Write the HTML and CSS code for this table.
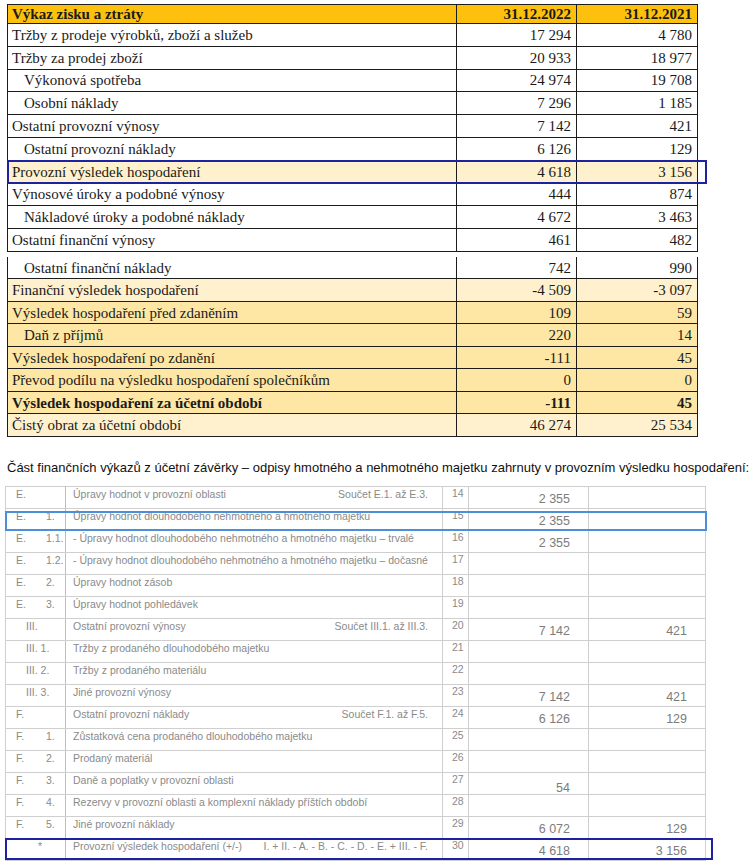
FILE: index.html
```html
<!DOCTYPE html>
<html lang="cs">
<head>
<meta charset="utf-8">
<title>Výkaz zisku a ztráty</title>
<link rel="stylesheet" href="styles.css">
</head>
<body>
<div class="top-block">
  <table class="pl pl-a">
    <colgroup><col class="c-label"><col class="c-val"><col class="c-val2"></colgroup>
    <tr class="head"><th class="lbl">Výkaz zisku a ztráty</th><th>31.12.2022</th><th>31.12.2021</th></tr>
    <tr><td class="lbl">Tržby z prodeje výrobků, zboží a služeb</td><td>17 294</td><td>4 780</td></tr>
    <tr><td class="lbl">Tržby za prodej zboží</td><td>20 933</td><td>18 977</td></tr>
    <tr><td class="lbl ind">Výkonová spotřeba</td><td>24 974</td><td>19 708</td></tr>
    <tr><td class="lbl ind">Osobní náklady</td><td>7 296</td><td>1 185</td></tr>
    <tr><td class="lbl">Ostatní provozní výnosy</td><td>7 142</td><td>421</td></tr>
    <tr><td class="lbl ind">Ostatní provozní náklady</td><td>6 126</td><td>129</td></tr>
    <tr class="light"><td class="lbl">Provozní výsledek hospodaření</td><td>4 618</td><td>3 156</td></tr>
    <tr><td class="lbl">Výnosové úroky a podobné výnosy</td><td>444</td><td>874</td></tr>
    <tr><td class="lbl ind">Nákladové úroky a podobné náklady</td><td>4 672</td><td>3 463</td></tr>
    <tr><td class="lbl">Ostatní finanční výnosy</td><td>461</td><td>482</td></tr>
  </table>
  <table class="pl pl-b">
    <colgroup><col class="c-label"><col class="c-val"><col class="c-val2"></colgroup>
    <tr class="notop"><td class="lbl ind">Ostatní finanční náklady</td><td>742</td><td>990</td></tr>
    <tr class="light"><td class="lbl">Finanční výsledek hospodaření</td><td>-4 509</td><td>-3 097</td></tr>
    <tr class="mid"><td class="lbl">Výsledek hospodaření před zdaněním</td><td>109</td><td>59</td></tr>
    <tr class="mid"><td class="lbl ind">Daň z příjmů</td><td>220</td><td>14</td></tr>
    <tr class="mid"><td class="lbl">Výsledek hospodaření po zdanění</td><td>-111</td><td>45</td></tr>
    <tr class="mid"><td class="lbl">Převod podílu na výsledku hospodaření společníkům</td><td>0</td><td>0</td></tr>
    <tr class="mid bold"><td class="lbl">Výsledek hospodaření za účetní období</td><td>-111</td><td>45</td></tr>
    <tr class="light"><td class="lbl">Čistý obrat za účetní období</td><td>46 274</td><td>25 534</td></tr>
  </table>
  <div class="mark mark-navy mark-top"></div>
</div>

<p class="caption">Část finančních výkazů z účetní závěrky – odpisy hmotného a nehmotného majetku zahrnuty v provozním výsledku hospodaření:</p>

<div class="scan-block">
  <table class="scan">
    <colgroup><col class="s-code"><col class="s-text"><col class="s-num"><col class="s-v1"><col class="s-v2"></colgroup>
    <tr><td class="code"><span class="k1">E.</span></td><td class="txt"><span>Úpravy hodnot v provozní oblasti</span><span class="sum">Součet E.1. až E.3.</span></td><td class="no">14</td><td class="v">2 355</td><td class="v"></td></tr>
    <tr><td class="code"><span class="k1">E.</span><span class="k2">1.</span></td><td class="txt"><span>Úpravy hodnot dlouhodobého nehmotného a hmotného majetku</span></td><td class="no">15</td><td class="v">2 355</td><td class="v"></td></tr>
    <tr><td class="code"><span class="k1">E.</span><span class="k2">1.1.</span></td><td class="txt"><span>- Úpravy hodnot dlouhodobého nehmotného a hmotného majetku – trvalé</span></td><td class="no">16</td><td class="v">2 355</td><td class="v"></td></tr>
    <tr><td class="code"><span class="k1">E.</span><span class="k2">1.2.</span></td><td class="txt"><span>- Úpravy hodnot dlouhodobého nehmotného a hmotného majetku – dočasné</span></td><td class="no">17</td><td class="v"></td><td class="v"></td></tr>
    <tr><td class="code"><span class="k1">E.</span><span class="k2">2.</span></td><td class="txt"><span>Úpravy hodnot zásob</span></td><td class="no">18</td><td class="v"></td><td class="v"></td></tr>
    <tr><td class="code"><span class="k1">E.</span><span class="k2">3.</span></td><td class="txt"><span>Úpravy hodnot pohledávek</span></td><td class="no">19</td><td class="v"></td><td class="v"></td></tr>
    <tr><td class="code"><span class="k3">III.</span></td><td class="txt"><span>Ostatní provozní výnosy</span><span class="sum">Součet III.1. až III.3.</span></td><td class="no">20</td><td class="v">7 142</td><td class="v">421</td></tr>
    <tr><td class="code"><span class="k3">III. 1.</span></td><td class="txt"><span>Tržby z prodaného dlouhodobého majetku</span></td><td class="no">21</td><td class="v"></td><td class="v"></td></tr>
    <tr><td class="code"><span class="k3">III. 2.</span></td><td class="txt"><span>Tržby z prodaného materiálu</span></td><td class="no">22</td><td class="v"></td><td class="v"></td></tr>
    <tr><td class="code"><span class="k3">III. 3.</span></td><td class="txt"><span>Jiné provozní výnosy</span></td><td class="no">23</td><td class="v">7 142</td><td class="v">421</td></tr>
    <tr><td class="code"><span class="k1">F.</span></td><td class="txt"><span>Ostatní provozní náklady</span><span class="sum">Součet F.1. až F.5.</span></td><td class="no">24</td><td class="v">6 126</td><td class="v">129</td></tr>
    <tr><td class="code"><span class="k1">F.</span><span class="k2">1.</span></td><td class="txt"><span>Zůstatková cena prodaného dlouhodobého majetku</span></td><td class="no">25</td><td class="v"></td><td class="v"></td></tr>
    <tr><td class="code"><span class="k1">F.</span><span class="k2">2.</span></td><td class="txt"><span>Prodaný materiál</span></td><td class="no">26</td><td class="v"></td><td class="v"></td></tr>
    <tr><td class="code"><span class="k1">F.</span><span class="k2">3.</span></td><td class="txt"><span>Daně a poplatky v provozní oblasti</span></td><td class="no">27</td><td class="v"><span class="low">54</span></td><td class="v"></td></tr>
    <tr><td class="code"><span class="k1">F.</span><span class="k2">4.</span></td><td class="txt"><span>Rezervy v provozní oblasti a komplexní náklady příštích období</span></td><td class="no">28</td><td class="v"></td><td class="v"></td></tr>
    <tr><td class="code"><span class="k1">F.</span><span class="k2">5.</span></td><td class="txt"><span>Jiné provozní náklady</span></td><td class="no">29</td><td class="v">6 072</td><td class="v">129</td></tr>
    <tr><td class="code"><span class="k4">*</span></td><td class="txt"><span>Provozní výsledek hospodaření (+/-)</span><span class="sum">I. + II. - A. - B. - C. - D. - E. + III. - F.</span></td><td class="no">30</td><td class="v">4 618</td><td class="v">3 156</td></tr>
  </table>
  <div class="mark mark-light mark-scan1"></div>
  <div class="mark mark-navy mark-scan2"></div>
</div>
</body>
</html>
```

FILE: styles.css
```css
html, body {
  margin: 0;
  padding: 0;
  background: #ffffff;
}

body {
  width: 751px;
  height: 867px;
  overflow: hidden;
  font-family: "Liberation Serif", "Times New Roman", serif;
  color: #1a1a1a;
}

/* ---------- top P&L table ---------- */
.top-block {
  position: relative;
  margin: 4px 0 0 7px;
  width: 690px;
}

.pl {
  border-collapse: collapse;
  table-layout: fixed;
  width: 690px;
  font-size: 15px;
}

.c-label { width: 449px; }
.c-val { width: 120px; }
.c-val2 { width: 121px; }

.pl td,
.pl th {
  border: 1px solid #1c1c1c;
  padding: 0 5px 0 5px;
  text-align: right;
  white-space: nowrap;
  line-height: 18px;
}

.pl-a td { height: 21.8px; }
.pl-a th { height: 18px; }
.pl-b td { height: 21.5px; }

.pl .lbl {
  text-align: left;
  padding-left: 4px;
}

.pl .ind {
  padding-left: 16px;
}

.pl .head th {
  background: #fdc00c;
  font-weight: bold;
  vertical-align: middle;
}

.pl .light td { background: #fff1cd; }
.pl .mid td { background: #fee7a4; }
.pl .bold td { font-weight: bold; }

.pl-b {
  margin-top: 5px;
}

.pl-b .notop td {
  border-top: none;
}

/* ---------- overlay marks ---------- */
.mark {
  position: absolute;
  box-sizing: border-box;
  border: 2px solid #1f239b;
  pointer-events: none;
}

.mark-navy { border-color: #1d22a0; }
.mark-light { border-color: #4a8fd8; }

.mark-top {
  left: 0;
  top: 156px;
  width: 700px;
  height: 24px;
}

/* ---------- caption ---------- */
.caption {
  margin: 23px 0 0 7px;
  font-family: "Liberation Sans", Arial, sans-serif;
  font-size: 13px;
  line-height: 16px;
  color: #111;
  white-space: nowrap;
}

/* ---------- scanned statement ---------- */
.scan-block {
  position: relative;
  margin: 10px 0 0 5px;
  width: 700px;
}

.scan {
  border-collapse: collapse;
  table-layout: fixed;
  width: 700px;
  font-family: "Liberation Sans", Arial, sans-serif;
  color: #8a8a8a;
  font-size: 10.5px;
}

.s-code { width: 60px; }
.s-text { width: 377px; }
.s-num { width: 26px; }
.s-v1 { width: 120px; }
.s-v2 { width: 117px; }

.scan tr {
  height: 22px;
}

.scan td {
  padding: 0;
  border: 1px solid #cfcfcf;
  vertical-align: top;
  white-space: nowrap;
  line-height: 13px;
}

.scan .code {
  border-right: 1px solid #bdbdbd;
  padding-top: 1px;
}

.k1 {
  display: inline-block;
  width: 30px;
  padding-left: 10px;
}

.k2 {
  display: inline-block;
}

.k3 {
  display: inline-block;
  padding-left: 20px;
}

.k4 {
  display: inline-block;
  padding-left: 32px;
}

.scan .txt {
  padding: 1px 14px 0 7px;
}

.sum {
  float: right;
}

.scan .no {
  padding: 0 0 0 9px;
}

.scan .v {
  text-align: right;
  vertical-align: top;
  padding: 5px 18px 0 0;
  font-size: 12.5px;
  line-height: 14px;
  color: #7c7c7c;
}

.low {
  position: relative;
  top: 3px;
}

.mark-scan1 {
  left: 0;
  top: 25px;
  width: 702px;
  height: 20px;
}

.mark-scan2 {
  left: 0;
  top: 352px;
  width: 708px;
  height: 22px;
}
```
